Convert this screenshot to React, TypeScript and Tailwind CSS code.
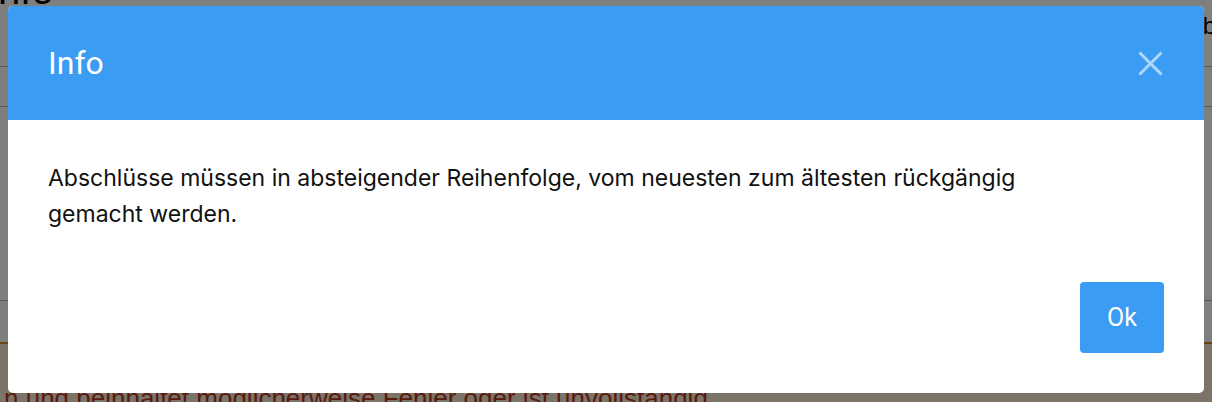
export default function App() {
  return (
    <div className="relative h-[402px] w-full overflow-hidden bg-white font-['Roboto',sans-serif]">
      {/* page behind the dialog */}
      <div className="flex h-[67px] items-start justify-between border-b border-[#b4b4b4]">
        <div className="-ml-[13px] -mt-[34px] font-['Liberation_Sans',sans-serif] text-[40px] leading-[48px] text-black">
          Info
        </div>
        <div className="mt-[12px] -mr-[4px] font-['Liberation_Sans',sans-serif] text-[24px] leading-[28px] text-black">
          b
        </div>
      </div>
      <div className="h-[40px] border-b border-[#b4b4b4]" />
      <div className="h-[194px] border-b border-[#b4b4b4]" />
      <div className="h-[41px]" />
      <div className="border-t-2 border-[#d98a1c] bg-[#f8e9d2] pt-[38px]">
        <p className="ml-[4px] whitespace-nowrap font-['Liberation_Sans',sans-serif] text-[26px] leading-[32px] text-[#b3371a]">
          n und beinhaltet möglicherweise Fehler oder ist unvollständig.
        </p>
      </div>

      {/* dialog */}
      <div className="fixed inset-0 bg-black/50">
        <div className="flex justify-center px-2 pt-[6px]">
          <div className="w-full overflow-hidden rounded-[5px] bg-white">
            <div className="flex h-[114px] items-center justify-between bg-[#3a9cf2] pl-10 pr-[41px]">
              <h2 className="text-[32px] leading-none text-white">Info</h2>
              <button className="text-white/60">
                <svg width="25" height="25" viewBox="0 0 25 25" fill="none" stroke="currentColor" strokeWidth="3">
                  <path d="M1.5 1.5l22 22M23.5 1.5l-22 22" />
                </svg>
              </button>
            </div>
            <div className="px-10 pt-10">
              <p className="max-w-[1020px] font-['Inter',sans-serif] text-[23px] leading-[36px] text-[#111]">
                Abschlüsse müssen in absteigender Reihenfolge, vom neuesten zum ältesten rückgängig gemacht werden.
              </p>
            </div>
            <div className="flex justify-end px-10 pb-10 pt-[50px]">
              <button className="h-[71px] w-[84px] rounded-[4px] bg-[#3a9cf2] text-[25px] text-white">Ok</button>
            </div>
          </div>
        </div>
      </div>
    </div>
  );
}
